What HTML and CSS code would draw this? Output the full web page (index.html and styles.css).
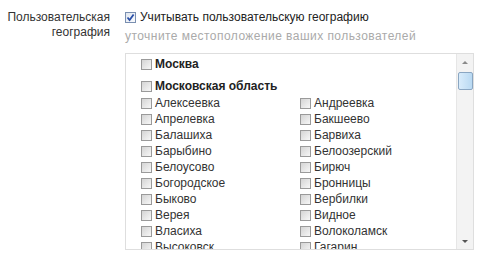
FILE: index.html
```html
<!DOCTYPE html>
<html lang="ru">
<head>
  <meta charset="UTF-8">
  <title>География</title>
  <link rel="stylesheet" href="styles.css">
</head>
<body>
  <div class="field">
    <div class="field-label">Пользовательская<br>география</div>
    <div class="field-body">
      <label class="option">
        <span class="cb checked">
          <svg width="9" height="9" viewBox="0 0 9 9"><path d="M1.5 4.5 L3.6 7 L7.6 1.5" fill="none" stroke="#2a4fa8" stroke-width="1.8"/></svg>
        </span>
        Учитывать пользовательскую географию
      </label>
      <div class="hint">уточните местоположение ваших пользователей</div>

      <!-- Region list -->
      <div class="regions">
        <div class="region-list">
          <div class="item bold"><span class="cb"></span>Москва</div>
          <div class="item bold region"><span class="cb"></span>Московская область</div>
          <div class="cities">
            <div class="item"><span class="cb"></span>Алексеевка</div>
            <div class="item"><span class="cb"></span>Андреевка</div>
            <div class="item"><span class="cb"></span>Апрелевка</div>
            <div class="item"><span class="cb"></span>Бакшеево</div>
            <div class="item"><span class="cb"></span>Балашиха</div>
            <div class="item"><span class="cb"></span>Барвиха</div>
            <div class="item"><span class="cb"></span>Барыбино</div>
            <div class="item"><span class="cb"></span>Белоозерский</div>
            <div class="item"><span class="cb"></span>Белоусово</div>
            <div class="item"><span class="cb"></span>Бирюч</div>
            <div class="item"><span class="cb"></span>Богородское</div>
            <div class="item"><span class="cb"></span>Бронницы</div>
            <div class="item"><span class="cb"></span>Быково</div>
            <div class="item"><span class="cb"></span>Вербилки</div>
            <div class="item"><span class="cb"></span>Верея</div>
            <div class="item"><span class="cb"></span>Видное</div>
            <div class="item"><span class="cb"></span>Власиха</div>
            <div class="item"><span class="cb"></span>Волоколамск</div>
            <div class="item"><span class="cb"></span>Высоковск</div>
            <div class="item"><span class="cb"></span>Гагарин</div>
          </div>
        </div>
        <div class="scrollbar">
          <div class="arrow up"></div>
          <div class="thumb"></div>
          <div class="track"></div>
          <div class="arrow down"></div>
        </div>
      </div>
    </div>
  </div>
</body>
</html>
```

FILE: styles.css
```css
body {
  margin: 0;
  padding: 0;
  font-family: "Liberation Sans", Arial, sans-serif;
  font-size: 12px;
  color: #333;
  background: #fff;
}
.field {
  display: grid;
  grid-template-columns: 110px 1fr;
  column-gap: 15px;
  padding-top: 10px;
}
.field-label {
  text-align: right;
  line-height: 15px;
}
.option {
  display: flex;
  align-items: center;
  gap: 4px;
  line-height: 15px;
  color: #222;
}
.hint {
  margin-top: 4px;
  line-height: 15px;
  letter-spacing: 0.45px;
  color: #aaa;
}
.cb {
  display: inline-flex;
  align-items: center;
  justify-content: center;
  width: 9px;
  height: 9px;
  border: 1px solid #9a9a9a;
  background: linear-gradient(135deg, #d4d4d4, #f7f7f7);
  flex: none;
}
.cb.checked {
  border-color: #7a8fb0;
  background: linear-gradient(135deg, #e0e6ef, #fafbfd);
}
.regions {
  display: flex;
  width: 347px;
  height: 195px;
  margin-top: 9px;
  border: 1px solid #dedede;
  overflow: hidden;
}
.region-list {
  flex: 1;
  padding: 2px 0 0 15px;
  overflow: hidden;
}
.item {
  display: flex;
  align-items: center;
  gap: 3px;
  height: 16px;
  color: #333;
  white-space: nowrap;
}
.item.bold {
  font-weight: bold;
  color: #222;
  margin-bottom: 6px;
}
.item.region {
  margin-bottom: 1px;
}
.cities {
  display: grid;
  grid-template-columns: 159px 159px;
}
.scrollbar {
  width: 16px;
  display: flex;
  flex-direction: column;
  align-items: center;
  background: #f3f3f3;
  border-left: 1px solid #e6e6e6;
}
.arrow {
  width: 0;
  height: 0;
  border-left: 3px solid transparent;
  border-right: 3px solid transparent;
}
.arrow.up {
  margin-top: 7px;
  border-bottom: 3px solid #8a8a8a;
}
.arrow.down {
  margin-bottom: 6px;
  border-top: 3px solid #555;
}
.thumb {
  width: 13px;
  height: 16px;
  margin-top: 8px;
  border: 1px solid #8aa6c2;
  border-radius: 2px;
  background: linear-gradient(90deg, #d9ecfb, #b9d9f2);
}
.track {
  flex: 1;
}
```
